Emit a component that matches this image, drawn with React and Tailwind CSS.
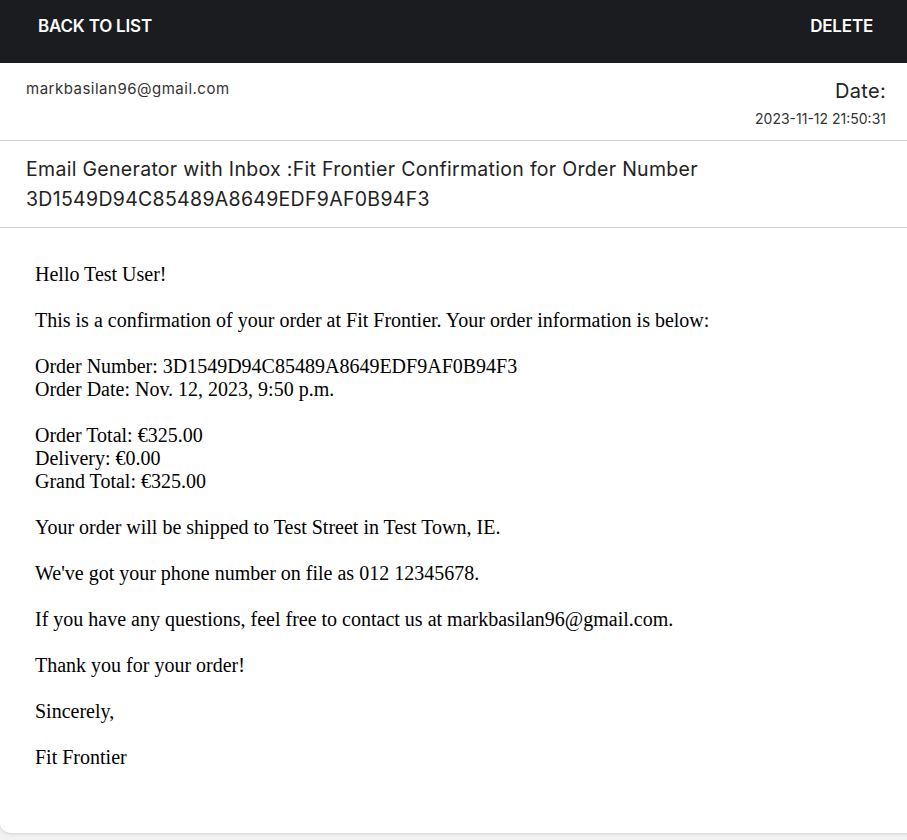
import React from "react";

const email = {
  from: "markbasilan96@gmail.com",
  date: "2023-11-12 21:50:31",
  subject:
    "Email Generator with Inbox :Fit Frontier Confirmation for Order Number 3D1549D94C85489A8649EDF9AF0B94F3",
  body: [
    ["Hello Test User!"],
    ["This is a confirmation of your order at Fit Frontier. Your order information is below:"],
    ["Order Number: 3D1549D94C85489A8649EDF9AF0B94F3", "Order Date: Nov. 12, 2023, 9:50 p.m."],
    ["Order Total: €325.00", "Delivery: €0.00", "Grand Total: €325.00"],
    ["Your order will be shipped to Test Street in Test Town, IE."],
    ["We've got your phone number on file as 012 12345678."],
    ["If you have any questions, feel free to contact us at markbasilan96@gmail.com."],
    ["Thank you for your order!"],
    ["Sincerely,"],
    ["Fit Frontier"],
  ],
};

export default function App() {
  return (
    <div className="min-h-[840px] overflow-x-hidden bg-[#f2f2f2] font-['Inter',sans-serif] text-[#222]">
      {/* Top bar */}
      <div className="flex h-[63px] justify-between bg-[#1a1c1f] pl-[38px] pr-[34px] pt-[14px] text-white">
        <button className="h-fit text-[17px] font-semibold tracking-[-0.2px]">
          BACK TO LIST
        </button>
        <button className="h-fit text-[17px] font-semibold tracking-[-0.2px]">
          DELETE
        </button>
      </div>

      {/* Card */}
      <div className="mr-[-10px] rounded-b-[10px] bg-white pb-[41px] shadow-[0_1px_3px_rgba(0,0,0,0.15)]">
        <div className="flex h-[78px] justify-between border-b border-[#cfcfcf] pl-[26px] pr-[31px] pt-[15px]">
          <p className="text-[15px] tracking-[0.5px] text-[#333]">{email.from}</p>
          <div className="flex flex-col items-end">
            <p className="mt-[1px] text-[20px] leading-[25px] tracking-[0.3px] text-[#222]">Date:</p>
            <p className="mt-[4px] text-[14px] text-[#333]">{email.date}</p>
          </div>
        </div>

        <div className="h-[87px] border-b border-[#cfcfcf] pl-[26px] pr-[170px] pt-[13px]">
          <h2 className="text-[19.5px] leading-[30px] tracking-[0.3px] text-[#222]">{email.subject}</h2>
        </div>

        <div className="px-[35px] pt-[35px] font-['Liberation_Serif',serif] text-[20px] leading-[23px] text-black">
          {email.body.map((para, i) => (
            <div key={i} className="mb-[23px]">
              {para.map((line, j) => (
                <p key={j}>{line}</p>
              ))}
            </div>
          ))}
        </div>
      </div>
    </div>
  );
}
